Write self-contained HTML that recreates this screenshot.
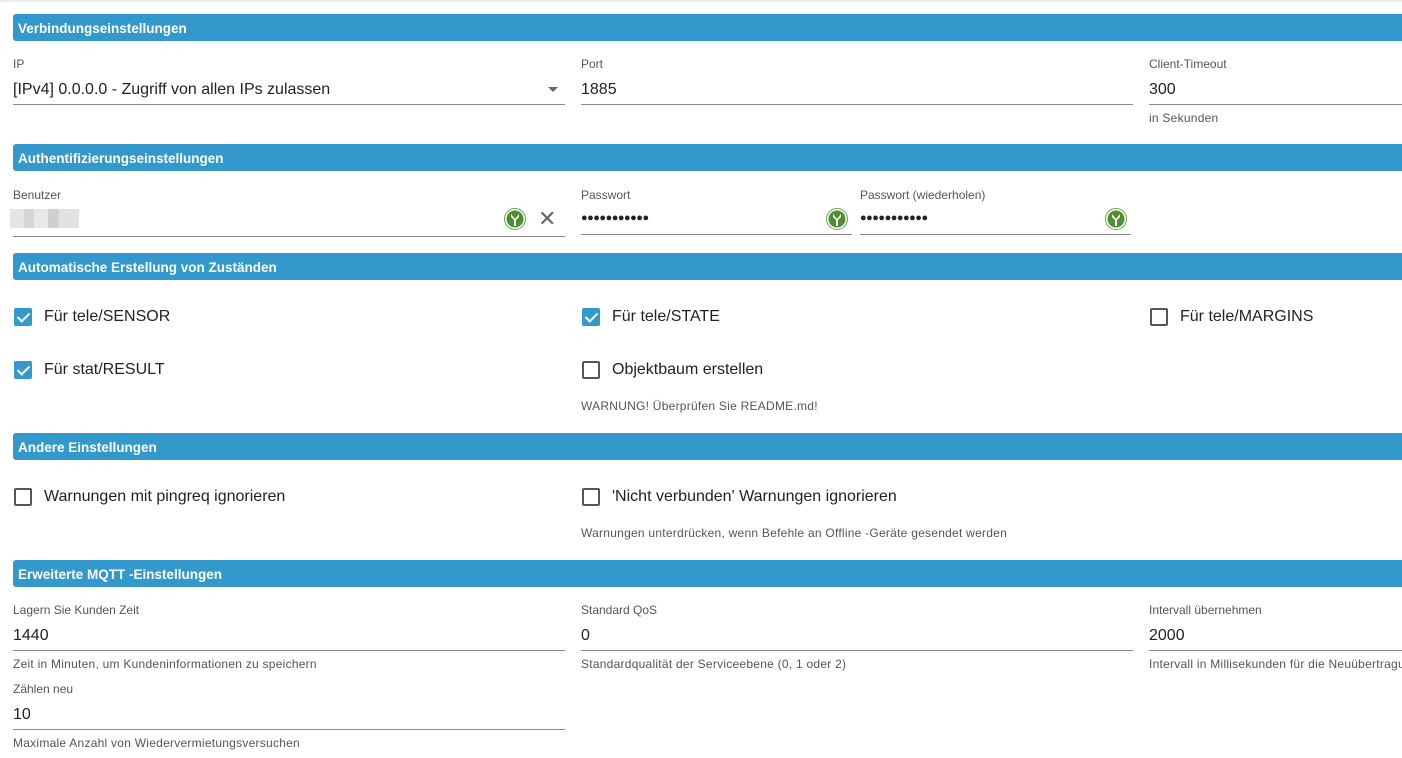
<!DOCTYPE html>
<html><head><meta charset="utf-8"><style>
body{margin:0;width:1402px;height:758px;background:#fff;font-family:"Liberation Sans",Arial,sans-serif;position:relative;overflow:hidden;color:#222}
.top{position:absolute;left:0;top:0;width:1402px;height:3px;background:linear-gradient(#e6e6e6,#fff)}
.bar{position:absolute;left:13px;width:1400px;height:27px;background:#3399cc;border-radius:3px 0 0 3px;color:#fff;font-weight:bold;font-size:13.5px;line-height:29px;padding-left:5px;box-sizing:border-box}
.lbl{position:absolute;font-size:12px;color:#555}
.val{position:absolute;font-size:16px;color:#222}
.line{position:absolute;height:1px;background:#8a8a8a}
.help{position:absolute;font-size:12px;letter-spacing:0.25px;color:#555;white-space:nowrap}
.cb{position:absolute;width:18px;height:18px;box-sizing:border-box;border:2px solid #555;border-radius:2px}
.cb.on{background:#3399cc;border-color:#3399cc}
.cb.on::after{content:"";position:absolute;left:4px;top:0px;width:5px;height:10px;border:solid #fff;border-width:0 2px 2px 0;transform:rotate(45deg)}
.cbl{position:absolute;font-size:16px;color:#222}
.icon{position:absolute;width:22px;height:22px}
.dots{position:absolute;font-size:11px;letter-spacing:-0.5px;color:#222;font-weight:bold}
</style></head><body>
<div class="top"></div>

<div class="bar" style="top:14px">Verbindungseinstellungen</div>
<div class="lbl" style="left:13px;top:57px">IP</div>
<div class="val" style="left:13px;top:81px">[IPv4] 0.0.0.0 - Zugriff von allen IPs zulassen</div>
<div style="position:absolute;left:548px;top:87px;border:5px solid transparent;border-top-color:#666;border-bottom:0"></div>
<div class="line" style="left:13px;top:104px;width:552px"></div>
<div class="lbl" style="left:581px;top:57px">Port</div>
<div class="val" style="left:581px;top:81px">1885</div>
<div class="line" style="left:581px;top:104px;width:552px"></div>
<div class="lbl" style="left:1149px;top:57px">Client-Timeout</div>
<div class="val" style="left:1149px;top:81px">300</div>
<div class="line" style="left:1149px;top:104px;width:260px"></div>
<div class="help" style="left:1149px;top:111px">in Sekunden</div>

<div class="bar" style="top:144px">Authentifizierungseinstellungen</div>
<div class="lbl" style="left:13px;top:188px">Benutzer</div>
<div style="position:absolute;left:10px;top:209px;width:69px;height:19px;background:linear-gradient(90deg,#e4e4e4 0 20%,#d6d6d6 20% 35%,#e8e8e8 35% 55%,#cfcfcf 55% 70%,#e2e2e2 70%)"></div>
<svg class="icon" style="left:504px;top:208px" viewBox="0 0 22 22"><circle cx="11" cy="11" r="10.5" fill="#fff" stroke="#6aa84f"/><circle cx="11" cy="11" r="8.5" fill="#4f8f2f"/><path d="M7 6 L11 11 L15 6 L15 9 L12 12 L12 18 L10 18 L10 12 L7 9Z" fill="#fff"/></svg>
<div style="position:absolute;left:538px;top:208px;font-size:22px;color:#666;line-height:22px">✕</div>
<div class="line" style="left:13px;top:236px;width:552px"></div>
<div class="lbl" style="left:581px;top:188px">Passwort</div>
<div class="dots" style="left:581px;top:212px">●●●●●●●●●●●</div>
<svg class="icon" style="left:826px;top:208px" viewBox="0 0 22 22"><circle cx="11" cy="11" r="10.5" fill="#fff" stroke="#6aa84f"/><circle cx="11" cy="11" r="8.5" fill="#4f8f2f"/><path d="M7 6 L11 11 L15 6 L15 9 L12 12 L12 18 L10 18 L10 12 L7 9Z" fill="#fff"/></svg>
<div class="line" style="left:581px;top:234px;width:271px"></div>
<div class="lbl" style="left:860px;top:188px">Passwort (wiederholen)</div>
<div class="dots" style="left:860px;top:212px">●●●●●●●●●●●</div>
<svg class="icon" style="left:1105px;top:208px" viewBox="0 0 22 22"><circle cx="11" cy="11" r="10.5" fill="#fff" stroke="#6aa84f"/><circle cx="11" cy="11" r="8.5" fill="#4f8f2f"/><path d="M7 6 L11 11 L15 6 L15 9 L12 12 L12 18 L10 18 L10 12 L7 9Z" fill="#fff"/></svg>
<div class="line" style="left:860px;top:234px;width:271px"></div>

<div class="bar" style="top:253px">Automatische Erstellung von Zuständen</div>
<div class="cb on" style="left:14px;top:308px"></div><div class="cbl" style="left:44px;top:308px">Für tele/SENSOR</div>
<div class="cb on" style="left:582px;top:308px"></div><div class="cbl" style="left:612px;top:308px">Für tele/STATE</div>
<div class="cb" style="left:1150px;top:308px"></div><div class="cbl" style="left:1180px;top:308px">Für tele/MARGINS</div>
<div class="cb on" style="left:14px;top:361px"></div><div class="cbl" style="left:44px;top:361px">Für stat/RESULT</div>
<div class="cb" style="left:582px;top:361px"></div><div class="cbl" style="left:612px;top:361px">Objektbaum erstellen</div>
<div class="help" style="left:581px;top:399px">WARNUNG! Überprüfen Sie README.md!</div>

<div class="bar" style="top:433px">Andere Einstellungen</div>
<div class="cb" style="left:14px;top:488px"></div><div class="cbl" style="left:44px;top:488px">Warnungen mit pingreq ignorieren</div>
<div class="cb" style="left:582px;top:488px"></div><div class="cbl" style="left:612px;top:488px">'Nicht verbunden' Warnungen ignorieren</div>
<div class="help" style="left:581px;top:526px">Warnungen unterdrücken, wenn Befehle an Offline -Geräte gesendet werden</div>

<div class="bar" style="top:560px">Erweiterte MQTT -Einstellungen</div>
<div class="lbl" style="left:13px;top:603px">Lagern Sie Kunden Zeit</div>
<div class="val" style="left:13px;top:627px">1440</div>
<div class="line" style="left:13px;top:650px;width:552px"></div>
<div class="help" style="left:13px;top:657px">Zeit in Minuten, um Kundeninformationen zu speichern</div>
<div class="lbl" style="left:581px;top:603px">Standard QoS</div>
<div class="val" style="left:581px;top:627px">0</div>
<div class="line" style="left:581px;top:650px;width:552px"></div>
<div class="help" style="left:581px;top:657px">Standardqualität der Serviceebene (0, 1 oder 2)</div>
<div class="lbl" style="left:1149px;top:603px">Intervall übernehmen</div>
<div class="val" style="left:1149px;top:627px">2000</div>
<div class="line" style="left:1149px;top:650px;width:260px"></div>
<div class="help" style="left:1149px;top:657px">Intervall in Millisekunden für die Neuübertragung</div>
<div class="lbl" style="left:13px;top:682px">Zählen neu</div>
<div class="val" style="left:13px;top:706px">10</div>
<div class="line" style="left:13px;top:729px;width:552px"></div>
<div class="help" style="left:13px;top:736px">Maximale Anzahl von Wiedervermietungsversuchen</div>
</body></html>
